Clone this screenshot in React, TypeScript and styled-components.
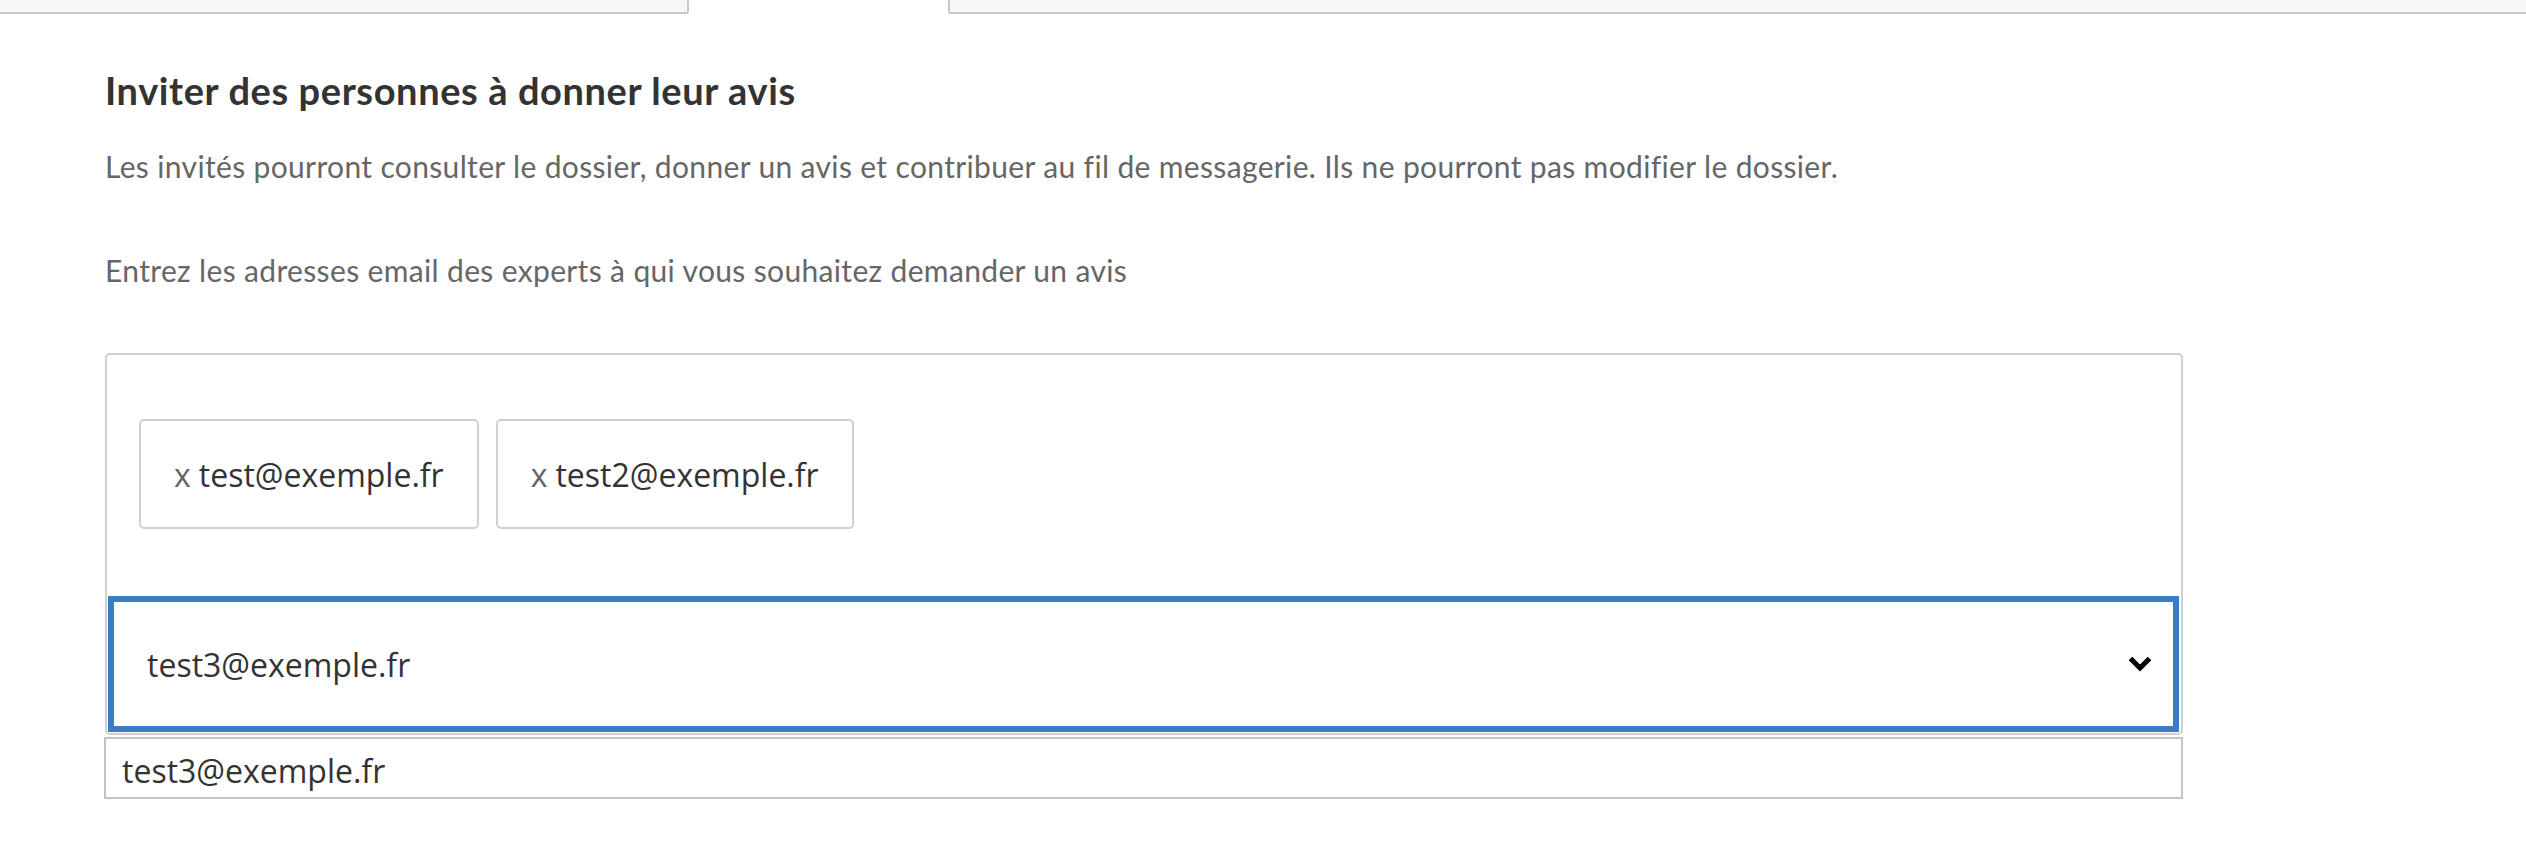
import React from "react";
import styled, { createGlobalStyle } from "styled-components";

const GlobalStyle = createGlobalStyle`
  html, body {
    margin: 0;
    padding: 0;
    background: #ffffff;
  }
  body {
    font-family: Lato, "Open Sans", sans-serif;
    color: #333333;
  }
`;

const Page = styled.div`
  width: 2526px;
  height: 850px;
  overflow: hidden;
  background: #ffffff;
`;

const TabBar = styled.div`
  display: flex;
  height: 14px;
`;

const Tab = styled.div<{ $side: "left" | "right" }>`
  box-sizing: border-box;
  height: 14px;
  background: #f7f7f7;
  border-bottom: 2px solid #c8c8c8;
  ${(p) =>
    p.$side === "left"
      ? `width: 689px; border-right: 2px solid #c8c8c8; border-bottom-right-radius: 3px;`
      : `flex: 1; border-left: 2px solid #c8c8c8; border-bottom-left-radius: 3px;`}
`;

const ActiveTab = styled.div`
  width: 259px;
`;

const Content = styled.div`
  padding-left: 105px;
  display: flex;
  flex-direction: column;
  align-items: flex-start;
`;

const Title = styled.h2`
  margin: 56px 0 0;
  font-family: Lato, sans-serif;
  font-weight: 700;
  font-size: 38px;
  letter-spacing: 0.6px;
  line-height: 40px;
  color: #333333;
`;

const Text = styled.p<{ $gap: number }>`
  margin: ${(p) => p.$gap}px 0 0;
  font-family: Lato, sans-serif;
  font-weight: 400;
  font-size: 30px;
  letter-spacing: 0.35px;
  line-height: 36px;
  color: #666666;
`;

const Field = styled.div`
  margin-top: 65px;
  width: 2078px;
  box-sizing: border-box;
  border: 2px solid #d0d0d0;
  border-radius: 5px;
  display: flex;
  flex-direction: column;
`;

const ChipRow = styled.div`
  display: flex;
  gap: 17px;
  padding: 64px 32px 67px;
`;

const Chip = styled.div`
  box-sizing: border-box;
  height: 110px;
  padding: 0 33px;
  display: flex;
  align-items: center;
  border: 2px solid #d0d0d0;
  border-radius: 5px;
  font-family: "Open Sans", sans-serif;
  font-size: 32px;
  color: #333333;
  white-space: nowrap;
`;

const Remove = styled.span`
  color: #666666;
  margin-right: 8px;
`;

const Select = styled.div`
  box-sizing: border-box;
  margin: 0 2px 1px 1px;
  height: 136px;
  border: 6px solid #3a7dc3;
  display: flex;
  align-items: center;
  justify-content: space-between;
  padding: 0 20px 0 33px;
  font-family: "Open Sans", sans-serif;
  font-size: 32px;
  color: #333333;
`;

const Chevron = styled.svg`
  width: 26px;
  height: 18px;
  display: block;
`;

const Option = styled.div`
  box-sizing: border-box;
  margin-top: 2px;
  margin-left: -1px;
  width: 2079px;
  height: 62px;
  border: 2px solid #c4c4c4;
  padding: 4px 16px 0;
  display: flex;
  align-items: center;
  font-family: "Open Sans", sans-serif;
  font-size: 32px;
  color: #333333;
`;

const emails = ["test@exemple.fr", "test2@exemple.fr"];

export default function App() {
  return (
    <Page>
      <GlobalStyle />
      <TabBar>
        <Tab $side="left" />
        <ActiveTab />
        <Tab $side="right" />
      </TabBar>
      <Content>
        <Title>Inviter des personnes à donner leur avis</Title>
        <Text $gap={38}>
          Les invités pourront consulter le dossier, donner un avis et contribuer au fil de
          messagerie. Ils ne pourront pas modifier le dossier.
        </Text>
        <Text $gap={68}>
          Entrez les adresses email des experts à qui vous souhaitez demander un avis
        </Text>
        <Field>
          <ChipRow>
            {emails.map((e) => (
              <Chip key={e}>
                <Remove>x</Remove>
                {e}
              </Chip>
            ))}
          </ChipRow>
          <Select>
            <span>test3@exemple.fr</span>
            <Chevron viewBox="0 0 26 18">
              <polyline
                points="3.5,3.5 13,13 22.5,3.5"
                fill="none"
                stroke="#000"
                strokeWidth="5"
                strokeLinejoin="miter"
              />
            </Chevron>
          </Select>
        </Field>
        <Option>test3@exemple.fr</Option>
      </Content>
    </Page>
  );
}
